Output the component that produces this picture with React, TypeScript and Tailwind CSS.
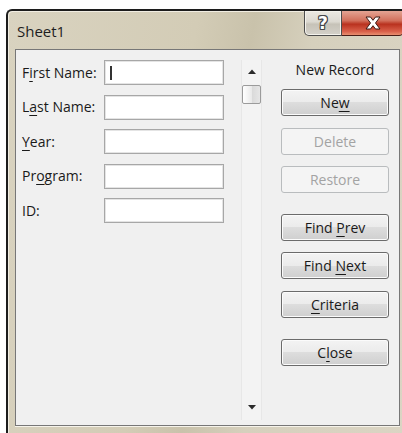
import React from 'react';

const font = { fontFamily: '"Open Sans", "Noto Sans", sans-serif' };

type Caption = { pre: string; acc: string; post: string };

const fields: Caption[] = [
  { pre: 'F', acc: 'i', post: 'rst Name:' },
  { pre: 'L', acc: 'a', post: 'st Name:' },
  { pre: '', acc: 'Y', post: 'ear:' },
  { pre: 'Pr', acc: 'o', post: 'gram:' },
  { pre: 'ID:', acc: '', post: '' },
];

type Btn = Caption & { disabled?: boolean; gap: string };

const buttons: Btn[] = [
  { pre: 'Ne', acc: 'w', post: '', gap: 'mt-[9px]' },
  { pre: 'Delete', acc: '', post: '', disabled: true, gap: 'mt-[12px]' },
  { pre: 'Restore', acc: '', post: '', disabled: true, gap: 'mt-[11px]' },
  { pre: 'Find ', acc: 'P', post: 'rev', gap: 'mt-[21px]' },
  { pre: 'Find ', acc: 'N', post: 'ext', gap: 'mt-[11px]' },
  { pre: '', acc: 'C', post: 'riteria', gap: 'mt-[12px]' },
  { pre: 'C', acc: 'l', post: 'ose', gap: 'mt-[21px]' },
];

// label text with its access key underlined
const Label = ({ c }: { c: Caption }) => (
  <span className="whitespace-pre">
    {c.pre}
    {c.acc && <span className="underline underline-offset-[3px] decoration-1">{c.acc}</span>}
    {c.post}
  </span>
);

const FormButton = ({ b }: { b: Btn }) => (
  <div
    className={`${b.gap} h-[27px] w-[108px] rounded-[3px] border flex items-center justify-center text-[14px] ${
      b.disabled
        ? 'border-[#b9bcbe] bg-[#f4f4f4] text-[#a3a3a3]'
        : 'border-[#6b6b6b] bg-[linear-gradient(#f3f3f3,#ebebeb_50%,#dddddd_50%,#cfcfcf)] text-[#1a1a1a] shadow-[inset_0_0_0_1px_#fbfbfb]'
    }`}
  >
    <Label c={b} />
  </div>
);

const Scrollbar = () => (
  <div className="ml-[17px] mt-[10px] w-[21px] h-[360px] bg-[#f3f3f3] border-x border-[#e7e7e7] flex flex-col items-center">
    {/* up arrow */}
    <svg width="8" height="5" viewBox="0 0 8 5" className="mt-[9px]">
      <path d="M0 5 L4 0.5 L8 5 Z" fill="#2a2a2a" />
    </svg>
    {/* thumb */}
    <div className="mt-[11px] w-[19px] h-[19px] rounded-[2px] border border-[#9b9b9b] bg-[linear-gradient(90deg,#ffffff,#eaeaea_50%,#d9d9d9_51%,#e6e6e6)]" />
    <div className="flex-1" />
    <svg width="8" height="5" viewBox="0 0 8 5" className="mb-[10px]">
      <path d="M0 0 L8 0 L4 4.5 Z" fill="#2a2a2a" />
    </svg>
  </div>
);

export default function App() {
  return (
    <div className="w-[402px] h-[433px] bg-white overflow-hidden pt-[9px] pl-[6px]" style={font}>
      <div className="w-[404px] h-[430px] rounded-tl-[6px] border-t-2 border-l-2 border-[#1c1c1c] bg-[linear-gradient(100deg,#d9d3c0,#d3ccb6_40%,#c9c2ab_52%,#d6d0bd_65%,#dbd5c4)] shadow-[inset_1px_1px_0_#f1ede2] flex flex-col">
        {/* title bar */}
        <div className="h-[38px] flex items-start">
          <span className="ml-[9px] mt-[9px] text-[15px] text-[#1e1e1e]">Sheet1</span>
          <div className="ml-auto mr-[6px] flex">
            <div className="w-[38px] h-[25px] rounded-bl-[5px] border border-t-0 border-[#4d4d4d] bg-[linear-gradient(#ece9e2,#dcd9d1_45%,#c6c2b8_55%,#d4d1c9)] shadow-[inset_0_0_0_1px_#f4f2ec] flex items-center justify-center">
              <span
                className="text-[17px] font-bold text-white leading-none [text-shadow:1px_0_0_#45464a,-1px_0_0_#45464a,0_1px_0_#45464a,0_-1px_0_#45464a,1px_1px_0_#45464a,-1px_-1px_0_#45464a,1px_-1px_0_#45464a,-1px_1px_0_#45464a]"
                style={{ fontFamily: '"DejaVu Sans", sans-serif' }}
              >
                ?
              </span>
            </div>
            <div className="w-[62px] h-[25px] rounded-br-[5px] border border-l-0 border-t-0 border-[#4a1c15] bg-[linear-gradient(#e4a493,#d2705c_40%,#b9321f_55%,#d9604a_85%,#e88f70)] flex items-center justify-center">
              <svg width="18" height="14" viewBox="0 0 18 14">
                <path
                  d="M2 1 H6.5 L9 4.3 L11.5 1 H16 L11.5 7 L16 13 H11.5 L9 9.7 L6.5 13 H2 L6.5 7 Z"
                  fill="#ffffff"
                  stroke="#3b1a14"
                  strokeWidth="1"
                  strokeLinejoin="round"
                />
              </svg>
            </div>
          </div>
        </div>

        {/* client area */}
        <div className="ml-[7px] w-[385px] h-[377px] border border-[#777777] bg-[#f0f0f0] shadow-[0_1px_0_#f6f3ea] flex text-[#1a1a1a]">
          {/* fields */}
          <div className="pl-[6px] pt-[10px] flex flex-col gap-[9.5px]">
            {fields.map((f, i) => (
              <div key={i} className="flex items-center h-[25px]">
                <span className="w-[82px] text-[14px] leading-none">
                  <Label c={f} />
                </span>
                <div className="w-[120px] h-[25px] bg-white border border-[#a7a7a7] shadow-[inset_0_0_0_1px_#e4e4e4] flex items-center">
                  {i === 0 && <div className="ml-[5px] w-[2px] h-[14px] bg-[#333333]" />}
                </div>
              </div>
            ))}
          </div>

          <Scrollbar />

          {/* record buttons */}
          <div className="ml-[19px] pt-[10px] w-[108px] flex flex-col">
            <div className="h-[20px] leading-[20px] text-center text-[14px]">New Record</div>
            {buttons.map((b, i) => (
              <FormButton key={i} b={b} />
            ))}
          </div>
        </div>
      </div>
    </div>
  );
}
